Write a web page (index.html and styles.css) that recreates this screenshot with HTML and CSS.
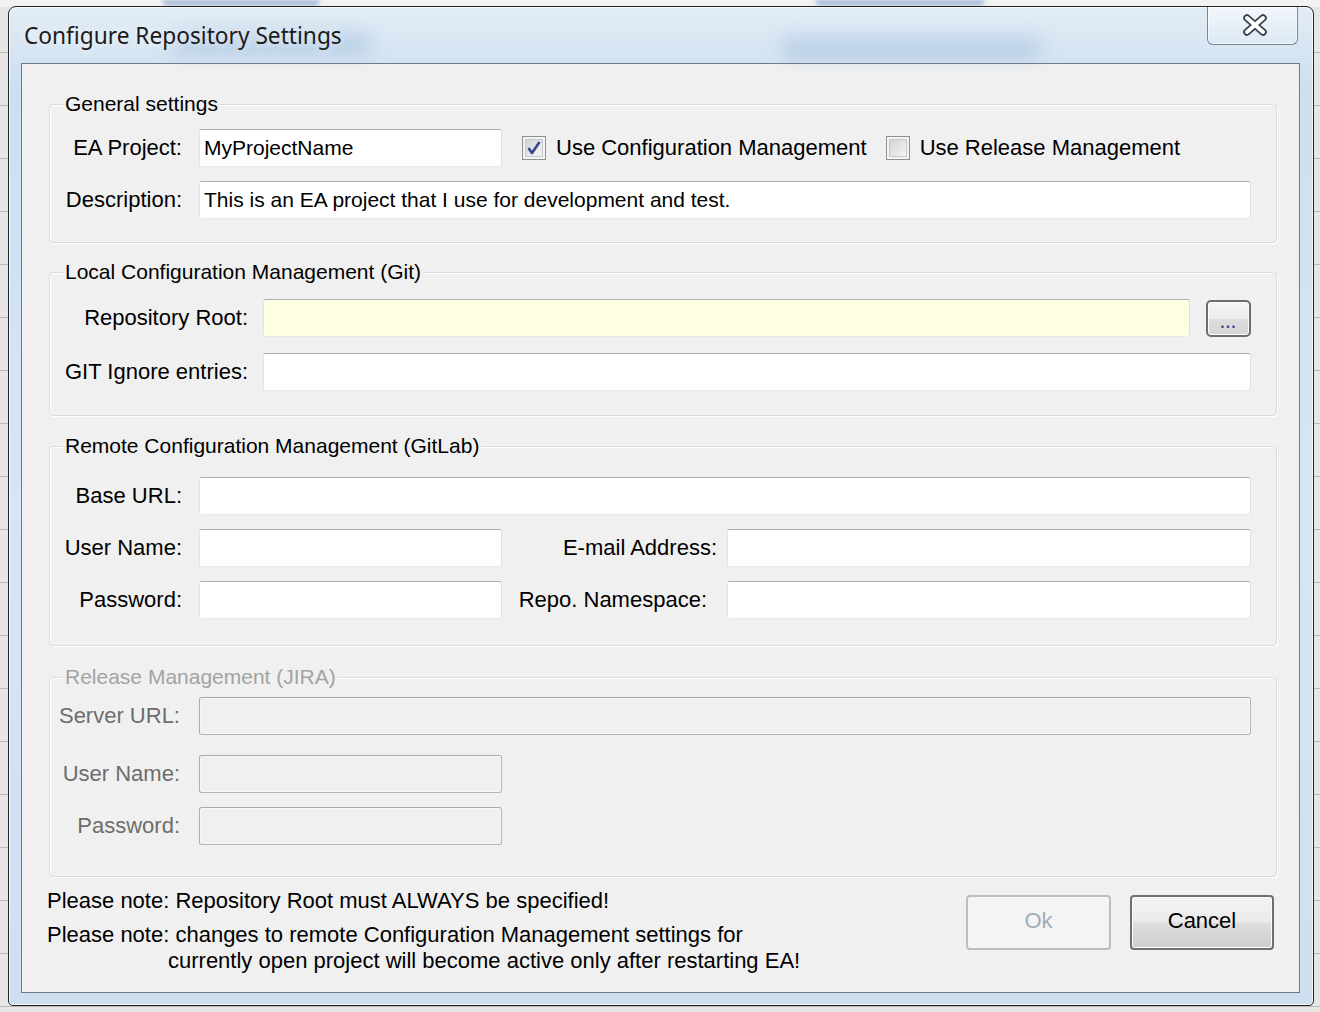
FILE: index.html
```html
<!DOCTYPE html>
<html>
<head>
<meta charset="utf-8">
<title>Configure Repository Settings</title>
<link rel="stylesheet" href="styles.css">
</head>
<body>
<div class="backdrop">
  <span class="bg-mark bg-load"></span>
  <span class="bg-mark bg-reset"></span>
  <span class="bg-mark bg-dash"></span>
</div>
<div class="window">
  <div class="titlebar">
    <span class="title">Configure Repository Settings</span>
    <span class="glass-blur gb1"></span>
    <span class="glass-blur gb2"></span>
    <button class="close" type="button" aria-label="Close">
      <svg width="28" height="22" viewBox="0 0 28 22">
        <path d="M6 4 L22 18 M22 4 L6 18" stroke="#3a3f48" stroke-width="7.5" stroke-linecap="round"/>
        <path d="M6 4 L22 18 M22 4 L6 18" stroke="#ffffff" stroke-width="4" stroke-linecap="round"/>
      </svg>
    </button>
  </div>
  <div class="client">
    <div class="group g1">
      <div class="legend">General settings</div>
      <div class="rows">
        <div class="row">
          <label class="lbl l1">EA Project:</label>
          <input class="tb short" type="text" value="MyProjectName">
          <span class="check">
            <svg width="24" height="24" viewBox="0 0 24 24">
              <defs><linearGradient id="cg" x1="0" y1="0" x2="1" y2="1"><stop offset="0" stop-color="#cfd2d6"/><stop offset="1" stop-color="#f6f6f6"/></linearGradient></defs>
              <rect x="0.5" y="0.5" width="23" height="23" fill="#f4f4f4" stroke="#8e8f8f"/>
              <rect x="3.5" y="3.5" width="17" height="17" fill="url(#cg)" stroke="#c5c8cc"/>
              <path d="M6.5 12 L10 17 L17.5 6" fill="none" stroke="#36488a" stroke-width="2.6" stroke-linejoin="round"/>
            </svg>
          </span>
          <span class="check-text">Use Configuration Management</span>
          <span class="check">
            <svg width="24" height="24" viewBox="0 0 24 24">
              <rect x="0.5" y="0.5" width="23" height="23" fill="#f4f4f4" stroke="#8e8f8f"/>
              <rect x="3.5" y="3.5" width="17" height="17" fill="url(#cg)" stroke="#c5c8cc"/>
            </svg>
          </span>
          <span class="check-text">Use Release Management</span>
        </div>
        <div class="row">
          <label class="lbl l1">Description:</label>
          <input class="tb grow" type="text" value="This is an EA project that I use for development and test.">
        </div>
      </div>
    </div>

    <div class="group g2">
      <div class="legend">Local Configuration Management (Git)</div>
      <div class="rows">
        <div class="row">
          <label class="lbl l2">Repository Root:</label>
          <input class="tb grow yellow" type="text" value="">
          <button class="browse" type="button">...</button>
        </div>
        <div class="row">
          <label class="lbl l2">GIT Ignore entries:</label>
          <input class="tb grow" type="text" value="">
        </div>
      </div>
    </div>

    <div class="group g3">
      <div class="legend">Remote Configuration Management (GitLab)</div>
      <div class="rows">
        <div class="row">
          <label class="lbl l1">Base URL:</label>
          <input class="tb grow" type="text" value="">
        </div>
        <div class="row">
          <label class="lbl l1">User Name:</label>
          <input class="tb short" type="text" value="">
          <label class="lbl l3">E-mail Address:</label>
          <input class="tb grow" type="text" value="">
        </div>
        <div class="row">
          <label class="lbl l1">Password:</label>
          <input class="tb short" type="text" value="">
          <label class="lbl l3 l3b">Repo. Namespace:</label>
          <input class="tb grow" type="text" value="">
        </div>
      </div>
    </div>

    <div class="group g4 disabled">
      <div class="legend">Release Management (JIRA)</div>
      <div class="rows">
        <div class="row">
          <label class="lbl l4">Server URL:</label>
          <input class="tb grow" type="text" value="" disabled>
        </div>
        <div class="row r2">
          <label class="lbl l4">User Name:</label>
          <input class="tb short" type="text" value="" disabled>
        </div>
        <div class="row">
          <label class="lbl l4">Password:</label>
          <input class="tb short" type="text" value="" disabled>
        </div>
      </div>
    </div>

    <div class="footer">
      <div class="notes">
        <div class="note n1">Please note: Repository Root must ALWAYS be specified!</div>
        <div class="note n2">Please note: changes to remote Configuration Management settings for</div>
        <div class="note n3">currently open project will become active only after restarting EA!</div>
      </div>
      <div class="buttons">
        <button class="btn ok" type="button" disabled>Ok</button>
        <button class="btn cancel" type="button">Cancel</button>
      </div>
    </div>
  </div>
</div>
</body>
</html>
```

FILE: styles.css
```css
* { box-sizing: border-box; }

html, body {
  margin: 0;
  padding: 0;
}

body {
  width: 1320px;
  height: 1012px;
  overflow: hidden;
  position: relative;
  background: #d9d9d9;
  padding: 6px 6px 6px 8px;
  font-family: "Liberation Sans", Arial, sans-serif;
  color: #000;
}

.backdrop {
  position: absolute;
  left: 0;
  top: 0;
  width: 1320px;
  height: 1012px;
  background:
    linear-gradient(#f2f2f2 0 7px, transparent 7px),
    repeating-linear-gradient(#e6e6e6 0 52px, #b9b9b9 52px 53px);
}

.bg-mark {
  position: absolute;
  top: 0;
  height: 6px;
  background: #4a78ba;
  filter: blur(2px);
  border-radius: 0 0 8px 8px;
}
.bg-load { left: 162px; width: 158px; opacity: 0.45; }
.bg-reset { left: 815px; width: 170px; opacity: 0.45; }
.bg-dash { left: 1012px; width: 18px; height: 4px; top: 10px; background: #7a8ca5; opacity: 0.4; }

.window {
  position: relative;
  width: 1306px;
  height: 1000px;
  border: 1px solid #242424;
  border-radius: 8px 8px 5px 5px;
  background: linear-gradient(180deg, #e2ecf6 0%, #cddfef 8%, #d7e6f4 50%, #cfdfef 100%);
  box-shadow: inset 0 0 0 1px rgba(255,255,255,0.7);
  padding: 0 13px 12px 12px;
  display: flex;
  flex-direction: column;
}

.titlebar {
  position: relative;
  height: 56px;
  display: flex;
  align-items: flex-start;
  justify-content: space-between;
}

.title {
  margin: 15px 0 0 3px;
  font-family: "Noto Sans", "Open Sans", sans-serif;
  font-size: 22.7px;
  line-height: 28px;
  color: #1b1b1b;
  text-shadow: 0 0 8px rgba(255,255,255,0.9);
  position: relative;
  z-index: 1;
}

.glass-blur {
  position: absolute;
  height: 22px;
  border-radius: 12px;
  background: rgba(120,160,205,0.3);
  filter: blur(9px);
}
.gb1 { left: 150px; width: 200px; top: 26px; }
.gb2 { left: 760px; width: 260px; top: 30px; }

.close {
  width: 91px;
  height: 38px;
  margin: 0 2px 0 0;
  border: 1px solid #7d8794;
  border-top: none;
  border-radius: 0 0 6px 6px;
  background: linear-gradient(180deg, rgba(255,255,255,0.55), rgba(225,235,245,0.5));
  box-shadow: inset 0 0 0 1px rgba(255,255,255,0.6);
  display: flex;
  align-items: center;
  justify-content: center;
  padding: 0 0 2px 4px;
  position: relative;
  z-index: 1;
}

.client {
  flex: 1;
  background: #f0f0f0;
  border: 1px solid #6f7a87;
  padding: 40px 22px 0 27px;
  display: flex;
  flex-direction: column;
  font-size: 22px;
}

.group {
  border: 1px solid #d3dde4;
  border-radius: 4px;
  box-shadow: inset 1px 1px 0 #ffffff, 1px 1px 0 #ffffff;
}

.legend {
  width: fit-content;
  margin: -13px 0 0 13px;
  padding: 0 2px;
  background: #f0f0f0;
  font-size: 21px;
  line-height: 24px;
  height: 24px;
  white-space: nowrap;
}

.rows {
  display: flex;
  flex-direction: column;
  padding-right: 25px;
}

.row {
  display: flex;
  align-items: center;
  height: 38px;
}

.g1 .rows { padding-top: 13px; padding-bottom: 23px; gap: 14px; }
.g2 { margin-top: 29px; }
.g2 .rows { padding-top: 15px; padding-bottom: 24px; gap: 16px; }
.g3 { margin-top: 30px; }
.g3 .rows { padding-top: 19px; padding-bottom: 26px; gap: 14px; }
.g4 { margin-top: 31px; }
.g4 .rows { padding-top: 8px; padding-bottom: 31px; gap: 14px; }
.g4 .r2 { margin-top: 6px; }

.lbl {
  text-align: right;
  white-space: nowrap;
  flex: none;
}
.l1 { width: 132px; margin-right: 17px; }
.l2 { width: 198px; margin-right: 15px; }
.l3 { width: 215px; margin-right: 10px; }
.l3b { width: 205px; margin-right: 20px; }
.l4 { width: 130px; margin-right: 19px; }

.tb {
  height: 38px;
  border: 1px solid;
  border-color: #abadb3 #dbdfe6 #e3e9ef #e2e3ea;
  border-radius: 3px;
  background: #ffffff;
  font-family: "Liberation Sans", Arial, sans-serif;
  font-size: 21px;
  color: #000;
  padding: 0 4px;
  outline: none;
}
.short { width: 303px; flex: none; }
.grow { flex: 1; min-width: 0; }
.yellow { background: #ffffe1; }

.tb:disabled {
  background: #f0f0f0;
  border-color: #a9a9a9 #b5b5b5 #b5b5b5 #adadad;
  box-shadow: inset 0 0 0 1px #f7f7f7;
}

.check {
  width: 24px;
  height: 24px;
  margin: 0 10px 0 20px;
  flex: none;
  display: block;
}
.check svg { display: block; }
.check-text { white-space: nowrap; }
.check-text + .check { margin-left: 19px; }

.browse {
  width: 45px;
  height: 37px;
  margin-left: 16px;
  flex: none;
  border: 2px solid #6e6e6e;
  border-radius: 5px;
  background: linear-gradient(180deg, #f6f6f6 0%, #ebebeb 50%, #dddddd 51%, #d6d6d6 100%);
  box-shadow: inset 0 0 0 1px #fbfbfb;
  font-family: "Liberation Sans", Arial, sans-serif;
  font-size: 16px;
  font-weight: bold;
  color: #5b3d9a;
  padding: 10px 0 0 0;
  line-height: 1;
  letter-spacing: 1px;
}

.disabled .legend { color: #a3a3a3; }
.disabled .lbl { color: #6d6d6d; }

.footer {
  display: flex;
  justify-content: space-between;
  align-items: flex-start;
  margin-top: 11px;
}

.notes {
  margin-left: -2px;
  line-height: 26px;
  white-space: nowrap;
}
.n2 { margin-top: 8px; }
.n3 { padding-left: 121px; }

.buttons {
  display: flex;
  gap: 19px;
  margin: 7px 3px 0 0;
}

.btn {
  height: 55px;
  border-radius: 4px;
  font-family: "Liberation Sans", Arial, sans-serif;
  font-size: 22px;
  padding: 0 0 4px 0;
}
.ok {
  width: 145px;
  border: 2px solid #bcbfc2;
  background: #f4f4f4;
  color: #a2adb8;
}
.cancel {
  width: 144px;
  border: 2px solid #6f6f6f;
  background: linear-gradient(180deg, #f3f3f3 0%, #ebebeb 48%, #dddddd 52%, #cfcfcf 100%);
  box-shadow: inset 0 0 0 1px #fcfcfc;
  color: #000;
}
```
